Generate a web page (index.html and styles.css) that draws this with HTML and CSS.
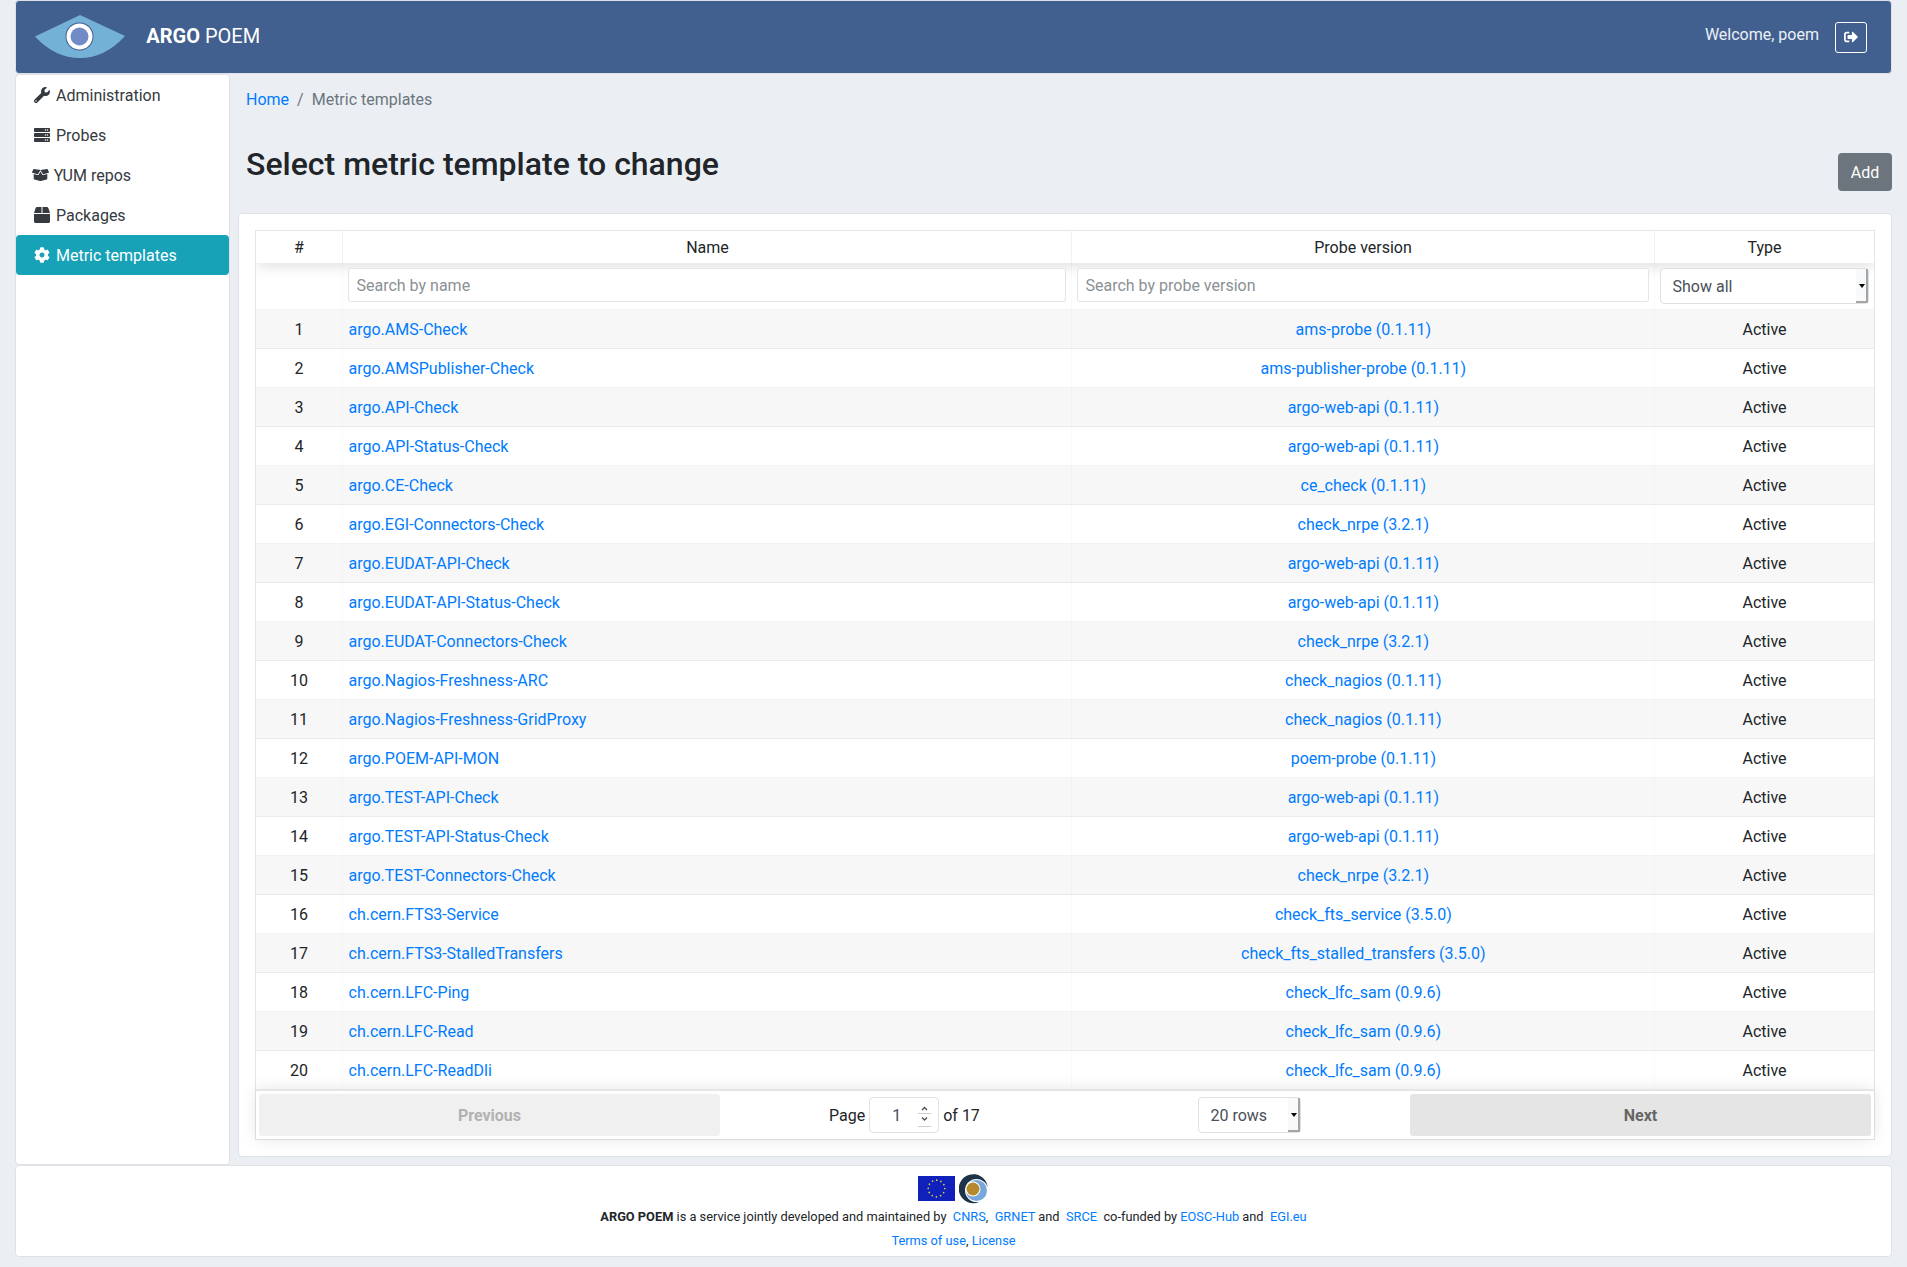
FILE: index.html
```html
<!DOCTYPE html>
<html lang="en">
<head>
<meta charset="utf-8">
<title>ARGO POEM</title>
<link rel="stylesheet" href="styles.css">
</head>
<body>
<header class="navbar">
  <svg class="logo" viewBox="0 0 90 43" width="90" height="43">
    <path d="M0 21.500L45 0l45 21Q70 43 45 43Q20 43 0 21.500z" fill="#74b1d7"/>
    <circle cx="44.500" cy="21.500" r="14" fill="#42608f"/>
    <circle cx="44.500" cy="21.500" r="13" fill="#fff"/>
    <circle cx="44.500" cy="21.500" r="9" fill="#728bc7"/>
  </svg>
  <div class="brand"><b>ARGO</b> POEM</div>
  <div class="welcome">Welcome, poem</div>
  <button class="logout" aria-label="Log out">
    <svg viewBox="0 0 512 512" width="14" height="14"><path fill="currentColor" d="M497 273L329 441c-15 15-41 4.500-41-17v-96H152c-13.300 0-24-10.700-24-24v-96c0-13.300 10.700-24 24-24h136V88c0-21.400 25.900-32 41-17l168 168c9.300 9.400 9.300 24.600 0 34zM192 436v-40c0-6.600-5.400-12-12-12H96c-17.700 0-32-14.300-32-32V160c0-17.700 14.300-32 32-32h84c6.600 0 12-5.400 12-12V76c0-6.600-5.400-12-12-12H96c-53 0-96 43-96 96v192c0 53 43 96 96 96h84c6.600 0 12-5.400 12-12z"/></svg>
  </button>
</header>
<div class="middle">
  <nav class="sidebar">
    <a class="item"><svg viewBox="0 0 512 512" width="16" height="16"><path fill="currentColor" d="M507.730 109.100c-2.240-9.030-13.540-12.090-20.120-5.510l-74.360 74.360-67.880-11.310-11.310-67.880 74.360-74.360c6.620-6.620 3.430-17.900-5.660-20.160-47.380-11.740-99.550.91-136.580 37.930-39.640 39.640-50.550 97.100-34.050 147.200L18.740 402.760c-24.990 24.990-24.990 65.510 0 90.500 24.990 24.990 65.510 24.990 90.500 0l213.210-213.210c50.120 16.710 107.470 5.680 147.370-34.220 37.070-37.070 49.700-89.320 37.910-136.730zM64 472c-13.250 0-24-10.750-24-24 0-13.260 10.750-24 24-24s24 10.740 24 24c0 13.250-10.750 24-24 24z"/></svg><span>Administration</span></a>
    <a class="item"><svg viewBox="0 0 512 512" width="16" height="16"><path fill="currentColor" d="M480 160H32c-17.700 0-32-14.300-32-32V64c0-17.700 14.300-32 32-32h448c17.700 0 32 14.300 32 32v64c0 17.700-14.300 32-32 32zm-48-88a24 24 0 100 48 24 24 0 000-48zm-64 0a24 24 0 100 48 24 24 0 000-48zm112 248H32c-17.700 0-32-14.300-32-32v-64c0-17.700 14.300-32 32-32h448c17.700 0 32 14.300 32 32v64c0 17.700-14.300 32-32 32zm-48-88a24 24 0 100 48 24 24 0 000-48zm-64 0a24 24 0 100 48 24 24 0 000-48zm112 248H32c-17.700 0-32-14.300-32-32v-64c0-17.700 14.300-32 32-32h448c17.700 0 32 14.300 32 32v64c0 17.700-14.300 32-32 32zm-48-88a24 24 0 100 48 24 24 0 000-48zm-64 0a24 24 0 100 48 24 24 0 000-48z"/></svg><span>Probes</span></a>
    <a class="item repos"><svg viewBox="0 0 640 512" width="17" height="14"><path fill="currentColor" d="M425.700 256c-16.900 0-32.800-9-41.400-23.400L320 126l-64.200 106.600c-8.700 14.500-24.600 23.500-41.500 23.500-4.500 0-9-.6-13.300-1.900L64 215v178c0 14.700 10 27.500 24.200 31l216.200 54.100c10.200 2.500 20.900 2.500 31 0L551.800 424c14.200-3.600 24.200-16.400 24.200-31V215l-137 39.100c-4.300 1.300-8.800 1.900-13.300 1.900zm212.600-112.200L586.800 41c-3.100-6.200-9.800-9.800-16.700-8.900L320 64l91.700 152.100c3.800 6.300 11.400 9.300 18.500 7.300l197.900-56.500c9.900-2.900 14.700-13.900 10.200-23.100zM53.200 41L1.700 143.800c-4.600 9.200.3 20.200 10.100 23l197.900 56.500c7.100 2 14.700-1 18.500-7.300L320 64 69.800 32.100c-6.900-.8-13.500 2.700-16.600 8.900z"/></svg><span>YUM repos</span></a>
    <a class="item"><svg viewBox="0 0 512 512" width="16" height="16"><path fill="currentColor" d="M509.500 184.600L458.900 32.800C452.400 13.200 434.100 0 413.400 0H272v192h238.700c-.4-2.500-.4-5-1.200-7.400zM240 0H98.600c-20.700 0-39 13.200-45.500 32.800L2.500 184.600c-.8 2.400-.8 4.900-1.200 7.400H240V0zM0 224v240c0 26.500 21.500 48 48 48h416c26.500 0 48-21.500 48-48V224H0z"/></svg><span>Packages</span></a>
    <a class="item active"><svg viewBox="0 0 512 512" width="16" height="16"><path fill="currentColor" d="M487.400 315.700l-42.600-24.600c4.300-23.200 4.300-47 0-70.200l42.600-24.600c4.900-2.800 7.100-8.600 5.500-14-11.100-35.600-30-67.800-54.700-94.600-3.800-4.100-10-5.100-14.800-2.300L380.800 110c-17.900-15.400-38.500-27.300-60.800-35.100V25.800c0-5.600-3.900-10.500-9.400-11.700-36.700-8.200-74.300-7.800-109.200 0-5.500 1.200-9.400 6.100-9.400 11.700V75c-22.200 7.900-42.800 19.800-60.800 35.100L88.700 85.500c-4.900-2.800-11-1.900-14.800 2.300-24.700 26.700-43.600 58.900-54.700 94.600-1.700 5.400.6 11.200 5.500 14L67.300 221c-4.300 23.200-4.300 47 0 70.200l-42.600 24.600c-4.900 2.800-7.100 8.600-5.500 14 11.100 35.600 30 67.800 54.700 94.600 3.800 4.100 10 5.100 14.800 2.300l42.600-24.600c17.900 15.400 38.500 27.300 60.800 35.100v49.200c0 5.600 3.900 10.500 9.400 11.700 36.700 8.200 74.300 7.800 109.200 0 5.500-1.200 9.400-6.100 9.400-11.700v-49.200c22.200-7.900 42.800-19.800 60.800-35.100l42.600 24.600c4.900 2.800 11 1.900 14.800-2.300 24.700-26.700 43.600-58.900 54.700-94.600 1.500-5.500-.7-11.300-5.600-14.100zM256 336c-44.100 0-80-35.900-80-80s35.900-80 80-80 80 35.900 80 80-35.900 80-80 80z"/></svg><span>Metric templates</span></a>
  </nav>
  <main class="content">
    <div class="crumbs"><a>Home</a><i>/</i><span>Metric templates</span></div>
    <div class="heading"><h2>Select metric template to change</h2><button class="add">Add</button></div>
    <section class="card">
      <div class="table">
        <div class="body-wrap">
        <div class="row head"><div>#</div><div>Name</div><div>Probe version</div><div>Type</div></div>
        <div class="row filters"><div></div><div><input placeholder="Search by name"></div><div><input placeholder="Search by probe version"></div><div><div class="select">Show all<span class="drop"></span></div></div></div>
        <div class="row"><div>1</div><div><a>argo.AMS-Check</a></div><div><a>ams-probe (0.1.11)</a></div><div>Active</div></div>
        <div class="row"><div>2</div><div><a>argo.AMSPublisher-Check</a></div><div><a>ams-publisher-probe (0.1.11)</a></div><div>Active</div></div>
        <div class="row"><div>3</div><div><a>argo.API-Check</a></div><div><a>argo-web-api (0.1.11)</a></div><div>Active</div></div>
        <div class="row"><div>4</div><div><a>argo.API-Status-Check</a></div><div><a>argo-web-api (0.1.11)</a></div><div>Active</div></div>
        <div class="row"><div>5</div><div><a>argo.CE-Check</a></div><div><a>ce_check (0.1.11)</a></div><div>Active</div></div>
        <div class="row"><div>6</div><div><a>argo.EGI-Connectors-Check</a></div><div><a>check_nrpe (3.2.1)</a></div><div>Active</div></div>
        <div class="row"><div>7</div><div><a>argo.EUDAT-API-Check</a></div><div><a>argo-web-api (0.1.11)</a></div><div>Active</div></div>
        <div class="row"><div>8</div><div><a>argo.EUDAT-API-Status-Check</a></div><div><a>argo-web-api (0.1.11)</a></div><div>Active</div></div>
        <div class="row"><div>9</div><div><a>argo.EUDAT-Connectors-Check</a></div><div><a>check_nrpe (3.2.1)</a></div><div>Active</div></div>
        <div class="row"><div>10</div><div><a>argo.Nagios-Freshness-ARC</a></div><div><a>check_nagios (0.1.11)</a></div><div>Active</div></div>
        <div class="row"><div>11</div><div><a>argo.Nagios-Freshness-GridProxy</a></div><div><a>check_nagios (0.1.11)</a></div><div>Active</div></div>
        <div class="row"><div>12</div><div><a>argo.POEM-API-MON</a></div><div><a>poem-probe (0.1.11)</a></div><div>Active</div></div>
        <div class="row"><div>13</div><div><a>argo.TEST-API-Check</a></div><div><a>argo-web-api (0.1.11)</a></div><div>Active</div></div>
        <div class="row"><div>14</div><div><a>argo.TEST-API-Status-Check</a></div><div><a>argo-web-api (0.1.11)</a></div><div>Active</div></div>
        <div class="row"><div>15</div><div><a>argo.TEST-Connectors-Check</a></div><div><a>check_nrpe (3.2.1)</a></div><div>Active</div></div>
        <div class="row"><div>16</div><div><a>ch.cern.FTS3-Service</a></div><div><a>check_fts_service (3.5.0)</a></div><div>Active</div></div>
        <div class="row"><div>17</div><div><a>ch.cern.FTS3-StalledTransfers</a></div><div><a>check_fts_stalled_transfers (3.5.0)</a></div><div>Active</div></div>
        <div class="row"><div>18</div><div><a>ch.cern.LFC-Ping</a></div><div><a>check_lfc_sam (0.9.6)</a></div><div>Active</div></div>
        <div class="row"><div>19</div><div><a>ch.cern.LFC-Read</a></div><div><a>check_lfc_sam (0.9.6)</a></div><div>Active</div></div>
        <div class="row"><div>20</div><div><a>ch.cern.LFC-ReadDli</a></div><div><a>check_lfc_sam (0.9.6)</a></div><div>Active</div></div>
        </div>
        <div class="pager">
          <button class="page-btn" disabled>Previous</button>
          <div class="pager-mid">
            <div class="page-info"><span>Page</span> <span class="num"><span>1</span><svg viewBox="0 0 13 22" width="13" height="22" fill="none"><path d="M0 8.500h13M0 21.500h13" stroke="#ced0d2"/><path d="M4 5l2.500-2.500L9 5M4 12.500L6.500 15 9 12.500" stroke="#495057" stroke-width="1.300"/></svg></span> <span>of 17</span></div>
            <div class="select rows">20 rows<span class="drop"></span></div>
          </div>
          <button class="page-btn">Next</button>
        </div>
      </div>
    </section>
  </main>
</div>
<footer class="footer">
  <div class="logos">
    <svg viewBox="0 0 37 25" width="37" height="25"><path fill="#1020bb" d="M0 0h37v25H0z"/><circle cx="18.500" cy="12.500" r="8.300" fill="none" stroke="#d9dc3c" stroke-width="1.700" stroke-linecap="round" stroke-dasharray="0.010 4.336"/></svg>
    <svg viewBox="0 0 29 30" width="29" height="30"><path d="M27.500 14.500L28.500 12A14.500 14.500 0 1020 28z" fill="#1e3248"/><circle cx="17.500" cy="16.500" r="11.500" fill="#fff"/><circle cx="17.500" cy="16.500" r="10.500" fill="#78a7dc"/><circle cx="14" cy="15" r="7.500" fill="#fff"/><circle cx="14" cy="15" r="6.500" fill="#b68a2c"/></svg>
  </div>
  <p><b>ARGO POEM</b> is a service jointly developed and maintained by &nbsp;<a>CNRS</a>, &nbsp;<a>GRNET</a> and &nbsp;<a>SRCE</a> &nbsp;co-funded by <a>EOSC-Hub</a> and &nbsp;<a>EGI.eu</a></p>
  <p class="terms"><a>Terms of use</a>, <a>License</a></p>
</footer>
</body>
</html>
```

FILE: styles.css
```css
* { box-sizing: border-box; }
body {
  margin: 0;
  padding: 0 15px;
  background: #ebeff4;
  color: #212529;
  font: 16px/24px Roboto, sans-serif;
}
a { color: #007bff; text-decoration: none; }
b { font-weight: 700; }
button, input { font: inherit; }

.navbar {
  display: flex;
  align-items: center;
  height: 74px;
  padding: 0 24px 0 19px;
  border: 1px solid #dee2e6;
  border-radius: 4px;
  background: #42608f;
  color: #fff;
}
.logo { margin-top: -2px; }
.brand { margin: -3px 0 0 21.250px; font-size: 20px; line-height: 30px; }
.welcome { margin: -4px 16px 0 auto; color: #ecf0f6; }
.logout {
  display: flex;
  align-items: center;
  justify-content: center;
  width: 32px;
  height: 31px;
  padding: 0;
  border: 1px solid #fff;
  border-radius: 3px;
  background: none;
  color: #fff;
}

.middle { display: flex; }
.sidebar {
  width: 215px;
  height: 1091px;
  flex: none;
  border: 1px solid #dee2e6;
  border-radius: 4px;
  background: #fff;
}
.item {
  display: flex;
  align-items: center;
  gap: 6px;
  height: 40px;
  padding: 0 17px 0 18px;
  border-radius: 4px;
  color: #343a40;
}
.item span { padding-top: 2px; }
.repos { padding-left: 16px; gap: 4.750px; }
.item.active { background: #17a2b8; color: #fff; }

.content { flex: 1; padding: 14px 0 0 8px; }
.crumbs { display: flex; gap: 8px; padding: 0 8px; color: #6c757d; }
.crumbs i { font-style: normal; }
.heading {
  display: flex;
  justify-content: space-between;
  align-items: flex-end;
  height: 79px;
  padding-left: 8px;
}
h2 { margin: 0 0 8px; font-size: 32px; line-height: 38px; font-weight: 500; }
.add {
  width: 54px;
  height: 38px;
  padding: 2px 0 0;
  border: 0;
  border-radius: 4px;
  background: #6c757d;
  color: #fff;
}
.card {
  margin-top: 22px;
  padding: 16px;
  border: 1px solid #dee2e6;
  border-radius: 4px;
  background: #fff;
}
.table { border: 1px solid rgba(0, 0, 0, .1); }
.body-wrap { overflow: hidden; }
.row {
  display: grid;
  grid-template-columns: 87fr 729fr 583fr 219fr;
  height: 39px;
  border-bottom: 1px solid rgba(0, 0, 0, .05);
  text-align: center;
}
.row:nth-child(odd) { background: rgba(0, 0, 0, .03); }
.row:last-child { height: 38px; border-bottom: 0; }
.row > div { padding: 8px 5px 6px; border-right: 1px solid rgba(0, 0, 0, .02); }
.row > div:nth-child(2) { padding-left: 5.500px; text-align: left; }
.row > div:nth-child(3) { padding-left: 5.700px; }
.row > div:last-child { border-right: 0; }
.row.head {
  height: 32px;
  border: 0;
  background: none;
  box-shadow: 0 2px 15px 0 rgba(0, 0, 0, .15);
}
.row.head > div { padding: 5px 5px 3px; border-right-color: rgba(0, 0, 0, .05); text-align: center; }
.row.head > div:nth-child(2) { padding-left: 6px; }
.row.head > div:last-child { border-right: 0; }
.row.filters { height: 47px; }
.row.filters > div { padding: 5px; }
input {
  display: block;
  width: 100%;
  height: 34px;
  padding: 0 7.500px;
  border: 1px solid rgba(0, 0, 0, .1);
  border-radius: 3px;
  background: #fff;
}
input::placeholder { color: #8b9094; }
.select {
  position: relative;
  height: 36px;
  padding: 6px 11.500px 4px;
  border: 1px solid #dfe0e1;
  border-radius: 4px;
  background: #fff;
  color: #495057;
  text-align: left;
}
.drop {
  position: absolute;
  top: 0;
  right: 0;
  width: 12px;
  height: 34px;
  border-right: 2px solid #a5a5a5;
  border-bottom: 2px solid #a5a5a5;
  background: #f8f9fa;
}
.drop::after {
  content: "";
  position: absolute;
  top: 15px;
  left: 3px;
  border: 3px solid transparent;
  border-top: 4px solid #000;
  border-bottom: 0;
}
.pager {
  display: flex;
  padding: 3px;
  border-top: 2px solid rgba(0, 0, 0, .1);
  box-shadow: 0 0 15px 0 rgba(0, 0, 0, .1);
}
.page-btn {
  width: 461px;
  height: 42px;
  padding: 2px 0 0;
  border: 0;
  border-radius: 3px;
  background: #e5e5e5;
  color: #666;
  font-weight: 700;
}
.page-btn:disabled { background: #f0f0f0; color: #b2b2b2; }
.pager-mid {
  display: flex;
  flex: 1;
  align-items: center;
  justify-content: space-around;
}
.page-info { display: flex; align-items: center; gap: 4px; }
.page-info > span:not(.num), .num span { padding-top: 2px; }
.num {
  display: flex;
  align-items: center;
  justify-content: flex-end;
  gap: 17px;
  width: 70px;
  height: 36px;
  padding-right: 7px;
  border: 1px solid #dfe0e1;
  border-radius: 4px;
  background: #fff;
  color: #495057;
}
.num svg { margin-top: 2px; }
.rows { width: 103px; }

.footer {
  height: 92px;
  padding-top: 7px;
  border: 1px solid #dee2e6;
  border-radius: 4px;
  background: #fff;
  font-size: 12.800px;
  text-align: center;
}
.logos {
  display: flex;
  justify-content: center;
  align-items: center;
  gap: 4px;
  height: 32px;
  padding: 0 1px 1px 0;
}
.footer p { margin: 0; line-height: 24px; }
```
